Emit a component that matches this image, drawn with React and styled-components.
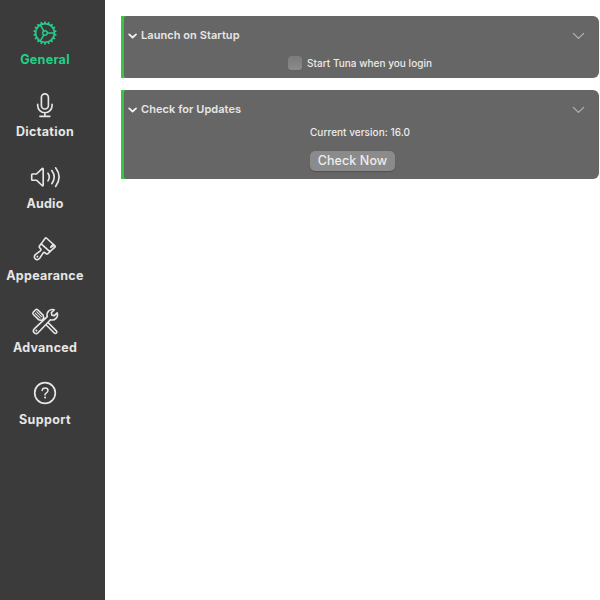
import React from "react";
import styled, { createGlobalStyle } from "styled-components";

const GlobalStyle = createGlobalStyle`
  * { box-sizing: border-box; }
  body { margin: 0; background: #fff; font-family: Inter, "Liberation Sans", sans-serif; }
`;

const Window = styled.div`
  display: flex;
  width: 600px;
  height: 600px;
  overflow: hidden;
`;

const Sidebar = styled.nav`
  flex: 0 0 105px;
  padding-top: 17px;
  background: #3b3b3b;
`;

const NavItem = styled.a`
  display: flex;
  flex-direction: column;
  align-items: center;
  width: 90px;
  height: 72px;
  color: ${(p) => (p.$active ? "#25ce8b" : "#e6e6e6")};
`;

const NavIcon = styled.svg`
  width: 32px;
  height: 32px;
  fill: none;
  stroke: currentColor;
  stroke-width: 1.65;
  stroke-linecap: round;
  stroke-linejoin: round;
`;

const NavLabel = styled.span`
  margin-top: 3px;
  font-size: 12.5px;
  line-height: 16px;
  font-weight: 700;
  letter-spacing: ${(p) => p.$tracking}px;
  white-space: nowrap;
`;

const Content = styled.main`
  flex: 1;
  display: flex;
  flex-direction: column;
  gap: 12px;
  padding: 16px 1px 0 16px;
`;

const PanelFrame = styled.section`
  height: ${(p) => p.$height}px;
  padding-left: 3px;
  background: linear-gradient(to right, #37c544 8px, transparent 8px);
`;

const PanelBody = styled.div`
  height: 100%;
  background: #666;
  border-radius: 3px 6px 6px 3px;
`;

const PanelHeader = styled.header`
  display: flex;
  align-items: center;
  height: 38px;
  padding: 0 14px 0 4px;
`;

const PanelTitle = styled.h2`
  flex: 1;
  margin: 0 0 0 4px;
  font-size: 11px;
  line-height: 14px;
  font-weight: 600;
  letter-spacing: 0.06px;
  color: #e6e6e6;
`;

const Chevron = styled.svg`
  width: ${(p) => p.$width}px;
  height: 8px;
  margin-top: 2px;
  fill: none;
  stroke: ${(p) => p.$color};
  stroke-width: ${(p) => p.$weight};
  stroke-linecap: round;
  stroke-linejoin: round;
`;

const CheckRow = styled.label`
  display: flex;
  align-items: center;
  gap: 5px;
  height: 18px;
  padding-left: 164px;
`;

const CheckBox = styled.span`
  width: 14px;
  height: 14px;
  border-radius: 3.5px;
  background: linear-gradient(#7b7b7b, #8b8b8b);
  box-shadow: 0 0 1px rgba(0, 0, 0, 0.2);
`;

const SmallText = styled.span`
  font-size: 10px;
  line-height: 12px;
  font-weight: 500;
  letter-spacing: 0.03px;
  color: #ebebeb;
`;

const Updates = styled.div`
  display: flex;
  flex-direction: column;
  align-items: flex-start;
  gap: 13px;
  padding: 0 0 0 186px;
  margin-top: -2px;
`;

const PushButton = styled.button`
  display: flex;
  align-items: flex-start;
  justify-content: center;
  width: 85px;
  height: 20px;
  padding: 0;
  border: 0;
  border-radius: 5px;
  background: #8b8b8b;
  box-shadow: 0 0.5px 1px rgba(0, 0, 0, 0.2);
  color: #ededed;
  font: 500 12.5px/20px Inter, sans-serif;
  letter-spacing: 0.1px;
`;

const teeth = Array.from({ length: 18 }, (_, i) => i * 20);

const icons = {
  gear: (
    <>
      <circle cx="16" cy="16" r="9.4" />
      <circle cx="16" cy="16" r="2.3" strokeWidth="1.4" />
      <path d="M18.4 16H25.5M14.8 13.9L11.2 7.8M14.8 18.1L11.2 24.2" strokeWidth="1.5" />
      {teeth.map((a) => (
        <path key={a} d="M16 6V5.1" strokeWidth="1.8" transform={`rotate(${a} 16 16)`} />
      ))}
    </>
  ),
  mic: (
    <>
      <rect x="12.4" y="4.8" width="7" height="15.2" rx="3.5" />
      <path d="M8.7 15.2v1.4a7.2 7.2 0 0 0 14.4 0v-1.4M15.9 24v3.2M10.9 27.3h10" />
    </>
  ),
  speaker: (
    <>
      <path d="M3.4 13h4.1l5.6-5.3c.6-.6 1.1-.3 1.1.5v15.8c0 .8-.5 1.1-1.1.5l-5.6-5.3H3.4c-.5 0-.7-.2-.7-.7v-4.8c0-.5.2-.7.7-.7Z" />
      <path d="M19 12.3c1.6 2.4 1.6 5.2 0 7.6M22.8 9.5c3 4.1 3 9.1 0 13.2M26.6 6.8c4.4 5.8 4.4 12.8 0 18.6" />
    </>
  ),
  brush: (
    <g transform="translate(17 14) rotate(42)" strokeWidth="1.6">
      <path d="M-6.4-5.9C-6.4-6.6-6-6.9-5.4-6.9H5.8C6.5-6.9 6.8-6.5 6.7-5.9L6 .9H-5.7Z" />
      <path d="M3.4-6.5L3.7-2.9L5.1-6.5" />
      <path d="M-5.7.9V2.7C-5.7 4.2-5 4.9-3.7 4.9H-3C-1.9 4.9-1.5 5.5-1.7 6.6L-2.8 12.4C-3.5 17.2 3.5 17.2 2.8 12.4L1.9 6.6C1.8 5.5 2.2 4.9 3.2 4.9H4C5.3 4.9 6 4.2 6 2.7V.9" />
      <circle cx="0" cy="12.9" r="1" fill="currentColor" stroke="none" />
    </g>
  ),
  tools: (
    <g transform="translate(16.2 16.8)" strokeWidth="1.6">
      <g transform="rotate(-45)">
        <rect x="-1.5" y="-3.5" width="3" height="19.3" rx="1.5" />
        <path d="M-3.2-13.5Q-3.2-15.3-1.4-15.3H1.4Q3.2-15.3 3.2-13.5V-6.2L1.6-3.5H-1.6L-3.2-6.2Z" />
        <path d="M-1-13.2V-6M1.1-13.2V-6" strokeWidth="1" />
      </g>
      <g transform="rotate(45)">
        <path
          fill="#3b3b3b"
          d="M-2.1-14.8V-10.8L0-9.4L2.1-10.8V-14.8A5.3 5.3 0 0 1 2.2-5.2L2.7 12.8A2.7 2.7 0 0 1-2.7 12.8L-2.2-5.2A5.3 5.3 0 0 1-2.1-14.8Z"
        />
        <circle cx="0" cy="12.4" r="1" fill="currentColor" stroke="none" />
      </g>
    </g>
  ),
  help: (
    <>
      <circle cx="16" cy="16" r="10.3" strokeWidth="1.7" />
      <path d="M13.2 13.5c.1-1.6 1.3-2.5 2.9-2.5 1.7 0 2.9 1 2.9 2.5 0 1.2-.7 1.8-1.6 2.4-1 .6-1.4 1.1-1.4 2" strokeWidth="1.5" />
      <circle cx="16.1" cy="20.6" r="1" fill="currentColor" stroke="none" />
    </>
  ),
};

const navigation = [
  { label: "General", icon: "gear", tracking: 0.3, active: true },
  { label: "Dictation", icon: "mic", tracking: 0.34 },
  { label: "Audio", icon: "speaker", tracking: 0.2 },
  { label: "Appearance", icon: "brush", tracking: 0.28 },
  { label: "Advanced", icon: "tools", tracking: 0.25 },
  { label: "Support", icon: "help", tracking: 0.36 },
];

function Panel({ title, height, children }) {
  return (
    <PanelFrame $height={height}>
      <PanelBody>
        <PanelHeader>
          <Chevron $width={9} $color="#f5f5f5" $weight={1.7} viewBox="0 0 9 8">
            <path d="M1.2 2.4l3.4 3.1L8 2.4" />
          </Chevron>
          <PanelTitle>{title}</PanelTitle>
          <Chevron $width={13} $color="#b5b5b5" $weight={1.2} viewBox="0 0 13 8">
            <path d="M1.3 1.4l5.2 5 5.2-5" />
          </Chevron>
        </PanelHeader>
        {children}
      </PanelBody>
    </PanelFrame>
  );
}

export default function App() {
  return (
    <>
      <GlobalStyle />
      <Window>
        <Sidebar>
          {navigation.map((item) => (
            <NavItem key={item.label} $active={item.active}>
              <NavIcon viewBox="0 0 32 32">{icons[item.icon]}</NavIcon>
              <NavLabel $tracking={item.tracking}>{item.label}</NavLabel>
            </NavItem>
          ))}
        </Sidebar>
        <Content>
          <Panel title="Launch on Startup" height={62}>
            <CheckRow>
              <CheckBox />
              <SmallText>Start Tuna when you login</SmallText>
            </CheckRow>
          </Panel>
          <Panel title="Check for Updates" height={89}>
            <Updates>
              <SmallText>Current version: 16.0</SmallText>
              <PushButton>Check Now</PushButton>
            </Updates>
          </Panel>
        </Content>
      </Window>
    </>
  );
}
